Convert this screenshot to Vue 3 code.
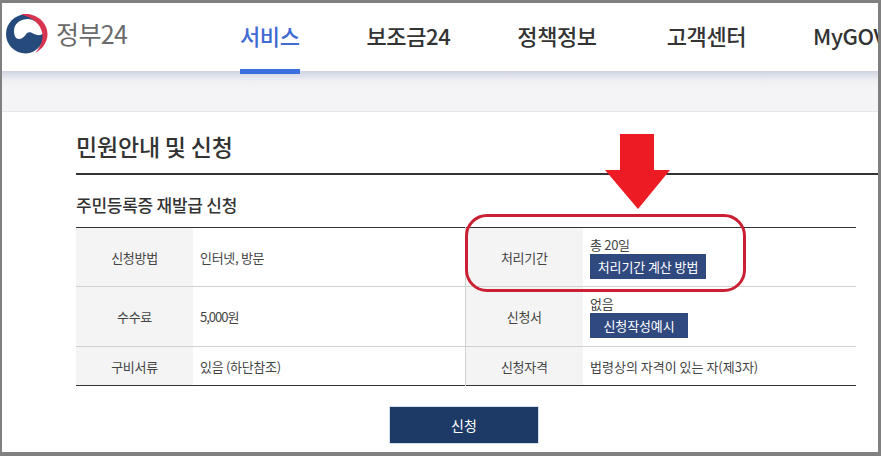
<template>
  <div class="frame">
    <div class="page">
      <header class="top">
        <div class="logo">
          <svg class="mark" width="42" height="41" viewBox="0 0 42 41">
            <circle cx="19.5" cy="21" r="19.5" fill="#264a7c" />
            <path d="M8 18C8 10 15 6 22 6c8 1 15 6 16.500 12.500C37 22.500 32 23 28 21c-3-2-5-2-7-1-3 4-5 6-8 6-3 0-5-3-5-8z" fill="#fff" />
            <path d="M38.500 18C39 27 35 35 25 40l4 0c8-3 12-11 11-20z" fill="#fff" />
            <path d="M15 1.500C28-1 42 8 41.500 22 41 30 36 36.500 29 40c5-5 8-12 7.500-19C35 11 26 4 15 1.500z" fill="#d8344f" />
          </svg>
          <span class="logo-text">정부24</span>
        </div>
        <nav class="gnb">
          <a v-for="item in menus" :key="item" class="gnb-item" :class="{ on: item === '서비스' }">{{ item }}</a>
        </nav>
      </header>
      <div class="band"></div>

      <main class="content">
        <h1 class="title">민원안내 및 신청</h1>
        <h2 class="subtitle">주민등록증 재발급 신청</h2>

        <table class="info">
          <colgroup>
            <col style="width: 117px" />
            <col style="width: 272px" />
            <col style="width: 118px" />
            <col />
          </colgroup>
          <tbody>
            <tr class="r1">
              <th>신청방법</th>
              <td>인터넷, 방문</td>
              <th class="side">처리기간</th>
              <td>
                <div class="val">총 20일</div>
                <button class="mini wide">처리기간 계산 방법</button>
              </td>
            </tr>
            <tr class="r2">
              <th>수수료</th>
              <td class="tight">5,000원</td>
              <th class="side">신청서</th>
              <td>
                <div class="val">없음</div>
                <button class="mini">신청작성예시</button>
              </td>
            </tr>
            <tr class="r3">
              <th>구비서류</th>
              <td>있음 (하단참조)</td>
              <th class="side">신청자격</th>
              <td class="loose">법령상의 자격이 있는 자(제3자)</td>
            </tr>
          </tbody>
        </table>

        <div class="actions">
          <button class="apply">신청</button>
        </div>
      </main>

      <!-- 빨간 표시 -->
      <div class="mark-box"></div>
      <svg class="arrow" width="66" height="76" viewBox="0 0 66 76">
        <path d="M15 0h34v36h16L33 75 0 36h15z" fill="#ed1c24" />
      </svg>
    </div>
  </div>
</template>

<script setup>
const menus = ['서비스', '보조금24', '정책정보', '고객센터', 'MyGOV']
</script>

<style>
html, body {
  margin: 0;
  background: #fff;
}
</style>

<style scoped>
.frame {
  width: 881px;
  height: 456px;
  box-sizing: border-box;
  border-style: solid;
  border-color: #808080;
  border-width: 3px 3px 4px 2px;
  overflow: hidden;
  font-family: "Noto Sans CJK KR", "Noto Sans", sans-serif;
  color: #333;
}

.page {
  position: relative;
  width: 876px;
  height: 449px;
  overflow: hidden;
  background: #fff;
}

.top {
  display: flex;
  height: 68px;
  background: #fff;
}

.logo {
  display: flex;
  align-items: center;
  width: 238px;
  padding: 0 0 0 4px;
  box-sizing: border-box;
  flex: none;
  height: 60px;
}

.mark {
  flex: none;
}

.logo-text {
  margin-left: 8px;
  font-size: 25px;
  color: #6a6a6a;
  letter-spacing: -0.6px;
}

.gnb {
  display: flex;
  gap: 67px;
  white-space: nowrap;
}

.gnb-item {
  height: 71px;
  box-sizing: border-box;
  padding-top: 12px;
  font-size: 22px;
  line-height: 40px;
  font-weight: 500;
  color: #333;
  letter-spacing: -0.4px;
}

.gnb-item:nth-child(4) {
  margin-left: 3px;
}

.gnb-item.on {
  color: #3f6bd3;
  border-bottom: 5px solid #3b6fde;
}

.band {
  height: 40px;
  background: linear-gradient(#cfd3e2 0, #eeeef3 9px, #f4f3f5 16px);
  border-bottom: 1px solid #e6e6e6;
}

.content {
  padding-left: 74px;
}

.title {
  margin: 0;
  padding: 17px 0 9px;
  height: 35px;
  font-size: 23px;
  line-height: 35px;
  font-weight: 500;
  color: #333;
  border-bottom: 2px solid #333;
  letter-spacing: -0.2px;
}

.subtitle {
  margin: 16px 0 9px;
  font-size: 17px;
  line-height: 27px;
  font-weight: 500;
  color: #333;
  letter-spacing: -0.25px;
}

.info {
  width: 780px;
  table-layout: fixed;
  border-collapse: collapse;
  border-top: 1px solid #333;
  border-bottom: 1px solid #333;
  font-size: 13px;
  letter-spacing: -0.3px;
}

.info th,
.info td {
  padding: 0;
  border-bottom: 1px solid #d0d0d0;
}

.info tr:last-child th,
.info tr:last-child td {
  border-bottom: 0;
}

.info th {
  background: #f4f4f4;
  font-weight: 400;
  color: #444;
  text-align: center;
}

.info th.side {
  border-left: 1px solid #d0d0d0;
}

.info td {
  padding-left: 7px;
  color: #444;
}

.info td.tight {
  letter-spacing: -1px;
}

.info td.loose {
  letter-spacing: 0;
}

.r1 { height: 59px; }
.r2 { height: 60px; }
.r3 { height: 39px; }

.val {
  line-height: 18px;
}

.mini {
  display: block;
  height: 25px;
  padding: 0;
  border: 0;
  background: #30497f;
  color: #fff;
  font-family: inherit;
  font-size: 13px;
  letter-spacing: -0.1px;
  width: 98px;
}

.mini.wide {
  width: 116px;
}

.actions {
  display: flex;
  justify-content: center;
  width: 776px;
  margin-top: 20px;
}

.apply {
  width: 150px;
  height: 38px;
  border: 1px solid #d4dfee;
  background: #1d3a66;
  color: #fff;
  font-family: inherit;
  font-size: 14px;
}

.mark-box {
  position: absolute;
  left: 463px;
  top: 211px;
  width: 281px;
  height: 78px;
  box-sizing: border-box;
  border: 3px solid #cb2033;
  border-radius: 22px;
}

.arrow {
  position: absolute;
  left: 603px;
  top: 131px;
}
</style>
